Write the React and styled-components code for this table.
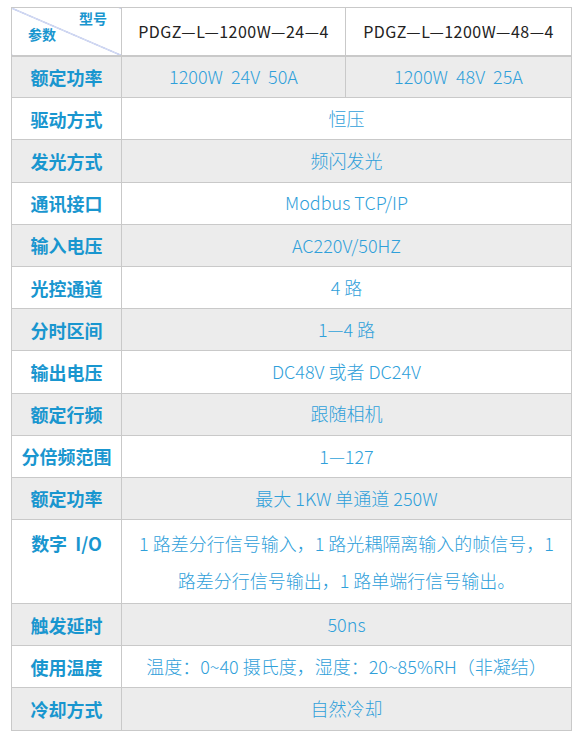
import React from 'react';
import styled, { createGlobalStyle } from 'styled-components';

const colors = {
    border: '#c9c9c9',
    stripe: '#ececec',
    label: '#1996cf',
    value: '#2fa0da',
    model: '#222222',
    diagonal: '#6f86d6'
};

const GlobalStyle = createGlobalStyle`
    html, body {
        margin: 0;
        padding: 0;
        background: #ffffff;
    }
    body {
        font-family: "Noto Sans CJK SC", "Noto Sans", sans-serif;
    }
`

const Page = styled.div`
    padding: 7px 0 0 11px;
`

const Table = styled.table`
    width: 560px;
    border-collapse: collapse;
    table-layout: fixed;
    border: 1px solid ${colors.border};
`

const Row = styled.tr`
    background-color: ${props => props.striped ? colors.stripe : '#ffffff'};
    height: ${props => props.tall ? '84px' : '42.2px'};
`

const HeadRow = styled.tr`
    height: 48px;
    border-bottom: 2px solid ${colors.border};
`

const Corner = styled.th`
    position: relative;
    padding: 0;
    border: 1px solid ${colors.border};
    background: linear-gradient(
        to top right,
        transparent calc(50% - 0.6px),
        ${colors.diagonal} 50%,
        transparent calc(50% + 0.6px)
    );
`

const CornerText = styled.span`
    position: absolute;
    font-size: 14px;
    font-weight: 700;
    line-height: 1;
    color: ${colors.label};
    ${props => props.top
        ? 'top: 3px; right: 14px;'
        : 'bottom: 14px; left: 16px;'}
`

const Model = styled.th`
    padding: 0;
    border: 1px solid ${colors.border};
    font-size: 16px;
    font-weight: 400;
    color: ${colors.model};
    text-align: center;
    letter-spacing: 0.5px;
`

const Label = styled.td`
    border: 1px solid ${colors.border};
    font-size: 18px;
    font-weight: 700;
    color: ${colors.label};
    text-align: center;
    vertical-align: ${props => props.top ? 'top' : 'middle'};
    padding: ${props => props.top ? '10px 0 0' : '0'};
    white-space: pre;
`

const Value = styled.td`
    padding: 0 7px;
    border: 1px solid ${colors.border};
    font-size: 18px;
    font-weight: 300;
    color: ${colors.value};
    text-align: center;
    white-space: pre-wrap;
    line-height: ${props => props.lines > 1 ? '37px' : '1.3'};
`

const rows = [
    { name: '额定功率', values: ['1200W  24V  50A', '1200W  48V  25A'] },
    { name: '驱动方式', value: '恒压' },
    { name: '发光方式', value: '频闪发光' },
    { name: '通讯接口', value: 'Modbus TCP/IP' },
    { name: '输入电压', value: 'AC220V/50HZ' },
    { name: '光控通道', value: '4 路' },
    { name: '分时区间', value: '1—4 路' },
    { name: '输出电压', value: 'DC48V 或者 DC24V' },
    { name: '额定行频', value: '跟随相机' },
    { name: '分倍频范围', value: '1—127' },
    { name: '额定功率', value: '最大 1KW 单通道 250W' },
    { name: '数字  I/O', value: '1 路差分行信号输入，1 路光耦隔离输入的帧信号，1 路差分行信号输出，1 路单端行信号输出。', lines: 2 },
    { name: '触发延时', value: '50ns' },
    { name: '使用温度', value: '温度：0~40 摄氏度，湿度：20~85%RH（非凝结）' },
    { name: '冷却方式', value: '自然冷却' }
];

export default function App() {
    return (
        <Page>
            <GlobalStyle />
            <Table>
                <colgroup>
                    <col style={{ width: 110 }} />
                    <col style={{ width: 224 }} />
                    <col style={{ width: 226 }} />
                </colgroup>
                <thead>
                    <HeadRow>
                        <Corner>
                            <CornerText top>型号</CornerText>
                            <CornerText>参数</CornerText>
                        </Corner>
                        <Model>PDGZ—L—1200W—24—4</Model>
                        <Model>PDGZ—L—1200W—48—4</Model>
                    </HeadRow>
                </thead>
                <tbody>
                    {rows.map((row, i) => (
                        <Row key={i} striped={i % 2 === 0} tall={row.lines > 1}>
                            <Label top={row.lines > 1}>{row.name}</Label>
                            {row.values
                                ? row.values.map((v, j) => <Value key={j}>{v}</Value>)
                                : <Value colSpan={2} lines={row.lines}>{row.value}</Value>}
                        </Row>
                    ))}
                </tbody>
            </Table>
        </Page>
    );
}
